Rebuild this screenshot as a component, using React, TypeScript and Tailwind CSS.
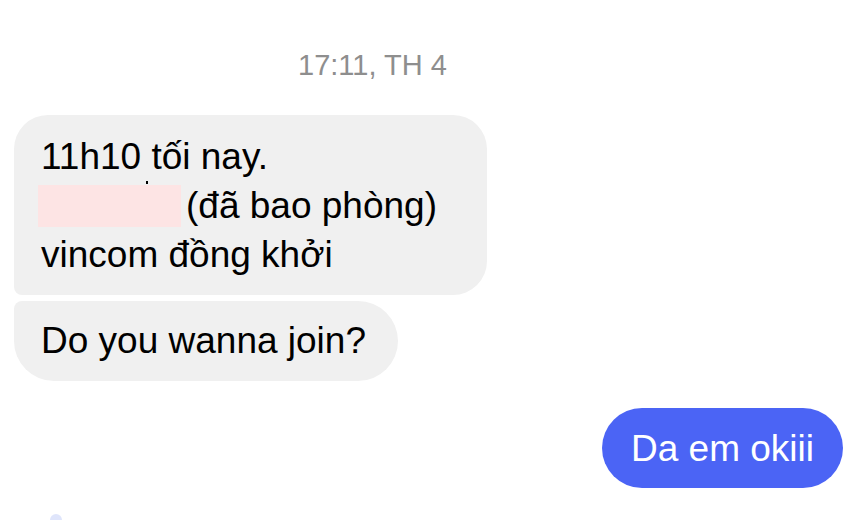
import React from 'react';

const font = { fontFamily: '"Liberation Sans", Arial, sans-serif' };

const App = () => {
  return (
    <div className="w-[860px] h-[520px] bg-white overflow-hidden relative" style={font}>
      <div className="pt-[49px] pl-[298px] text-[29px] leading-[33px] text-[#8e8e8e]">17:11, TH 4</div>

      <div className="mt-[33px] flex flex-col items-start gap-[6px] pl-[14px]">
        <div className="w-[473px] h-[180px] bg-[#f0f0f0] rounded-[34px] rounded-bl-[8px] pl-[27px] pt-[17px] text-[37px] leading-[49px] text-black">
          <div>11h10 tối nay.</div>
          <div className="flex items-center">
            <span className="relative -ml-[3px] w-[143px] h-[42px] bg-[#fde4e4]">
              <span className="absolute left-[108px] -top-[4px] w-[2px] h-[3px] bg-black" />
            </span>
            <span className="ml-[5px]">(đã bao phòng)</span>
          </div>
          <div>vincom đồng khởi</div>
        </div>

        <div className="w-[384px] h-[80px] bg-[#f0f0f0] rounded-[40px] rounded-tl-[8px] pl-[27px] pt-[15px] text-[37px] leading-[49px] text-black">
          Do you wanna join?
        </div>
      </div>

      <div className="mt-[27px] flex justify-end pr-[17px]">
        <div className="w-[241px] h-[80px] bg-[#4b64f5] rounded-full flex items-center justify-center text-[37px] leading-[49px] text-white">
          Da em okiii
        </div>
      </div>

      <div className="absolute left-[50px] top-[514px] w-[12px] h-[12px] rounded-full bg-[#dfe5fb]" />
    </div>
  );
};

export default App;
